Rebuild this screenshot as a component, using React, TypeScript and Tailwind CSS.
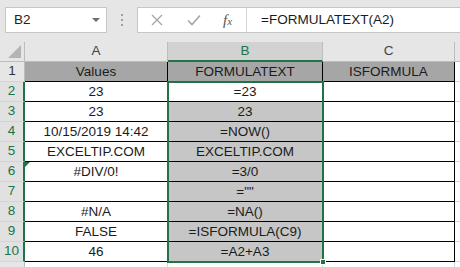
const rows: [string, string, string][] = [
  ["Values", "FORMULATEXT", "ISFORMULA"],
  ["23", "=23", ""],
  ["23", "23", ""],
  ["10/15/2019 14:42", "=NOW()", ""],
  ["EXCELTIP.COM", "EXCELTIP.COM", ""],
  ["#DIV/0!", "=3/0", ""],
  ["", '=""', ""],
  ["#N/A", "=NA()", ""],
  ["FALSE", "=ISFORMULA(C9)", ""],
  ["46", "=A2+A3", ""],
];

function Cell({ w, bg, children }: { w: string; bg: string; children?: React.ReactNode }) {
  return (
    <div className={`${w} ${bg} relative h-full shrink-0 flex items-center justify-center pt-[1px] border-r border-b border-black text-[13.5px] text-[#1b1b1b]`}>
      {children}
    </div>
  );
}

export default function App() {
  return (
    <div className="relative w-[460px] h-[267px] overflow-hidden bg-white font-['Liberation_Sans',Arial,sans-serif]">
      {/* formula bar */}
      <div className="h-[42px] bg-[#e6e6e6] flex items-start pt-[7px] pl-[5px]">
        <div className="w-[102px] h-[26px] bg-white border border-[#c6c6c6] flex items-center justify-between pl-[8px] pr-[6px] text-[13.5px] text-[#222]">
          <span>B2</span>
          <span className="w-0 h-0 border-l-[4px] border-r-[4px] border-t-[4px] border-l-transparent border-r-transparent border-t-[#6e6e6e]" />
        </div>
        <div className="w-[30px] h-[26px] flex flex-col items-center justify-center gap-[3px]">
          <span className="w-[2px] h-[2px] bg-[#a0a0a0]" />
          <span className="w-[2px] h-[2px] bg-[#a0a0a0]" />
          <span className="w-[2px] h-[2px] bg-[#a0a0a0]" />
        </div>
        <div className="flex-1 h-[26px] bg-white border border-[#c6c6c6] border-r-0 flex items-center">
          <div className="w-[109px] h-full flex items-center border-r border-[#d4d4d4]">
            <svg width="12" height="12" viewBox="0 0 12 12" className="ml-[13px]">
              <path d="M1 1L11 11M11 1L1 11" stroke="#a6a6a6" strokeWidth="1.3" />
            </svg>
            <svg width="14" height="12" viewBox="0 0 14 12" className="ml-[24px]">
              <path d="M1 6.5L5 10.5L13 1.5" stroke="#a6a6a6" strokeWidth="1.6" fill="none" />
            </svg>
            <span className="ml-[22px] font-['Liberation_Serif',serif] italic text-[15px] text-[#555]">
              f<span className="text-[11px]">x</span>
            </span>
          </div>
          <span className="ml-[14px] text-[13.5px] text-[#1b1b1b]">=FORMULATEXT(A2)</span>
        </div>
      </div>

      {/* column headers */}
      <div className="h-[20px] flex bg-[#e6e6e6] text-[13.5px] text-[#444]">
        <div className="w-[25px] h-full shrink-0 border-r border-b border-[#bdbdbd] flex items-end justify-end pr-[3px] pb-[3px]">
          <svg width="13" height="13" viewBox="0 0 13 13">
            <polygon points="13,0 13,13 0,13" fill="#b4b4b4" />
          </svg>
        </div>
        <div className="w-[143px] shrink-0 border-r border-b border-[#bdbdbd] flex items-center justify-center">A</div>
        <div className="w-[155px] shrink-0 bg-[#d2d2d2] border-r border-[#bdbdbd] border-b-2 border-b-[#217346] flex items-center justify-center text-[#217346]">B</div>
        <div className="w-[132px] shrink-0 border-r border-b border-[#bdbdbd] flex items-center justify-center">C</div>
        <div className="flex-1 border-b border-[#bdbdbd]" />
      </div>

      {/* rows */}
      {rows.map((r, i) => (
        <div key={i} className="h-[20px] flex">
          <div
            className={`w-[25px] h-full shrink-0 flex items-center justify-center border-b border-[#d4d4d4] text-[13.5px] ${
              i === 0 ? "bg-[#e6e6e6] text-[#333] border-r border-r-[#bdbdbd]" : "bg-[#e1e1e1] text-[#217346] border-r-2 border-r-[#217346]"
            }`}
          >
            {i + 1}
          </div>
          <Cell w="w-[143px]" bg={i === 0 ? "bg-[#a6a6a6]" : "bg-white"}>
            {i === 5 && (
              <span className="absolute left-0 top-0 w-0 h-0 border-t-[5px] border-r-[5px] border-t-[#217346] border-r-transparent" />
            )}
            {r[0]}
          </Cell>
          <Cell w="w-[155px]" bg={i === 0 ? "bg-[#a6a6a6]" : i === 1 ? "bg-white" : "bg-[#c6c6c6]"}>
            {r[1]}
          </Cell>
          <Cell w="w-[132px]" bg={i === 0 ? "bg-[#a6a6a6]" : "bg-white"}>
            {r[2]}
          </Cell>
          <div className="flex-1 border-b border-[#d4d4d4]" />
        </div>
      ))}
      <div className="h-[10px] flex">
        <div className="w-[25px] shrink-0 bg-[#e6e6e6] border-r border-[#bdbdbd]" />
        <div className="w-[143px] shrink-0 border-r border-[#d4d4d4]" />
        <div className="w-[155px] shrink-0 border-r border-[#d4d4d4]" />
        <div className="w-[132px] shrink-0 border-r border-[#d4d4d4]" />
      </div>

      {/* selection overlay B2:B10 */}
      <div className="absolute left-[167px] top-[81px] w-[157px] h-[182px] border-2 border-[#217346] pointer-events-none" />
      <div className="absolute left-[320px] top-[259px] w-[6px] h-[6px] bg-[#217346] border border-white" />
    </div>
  );
}
